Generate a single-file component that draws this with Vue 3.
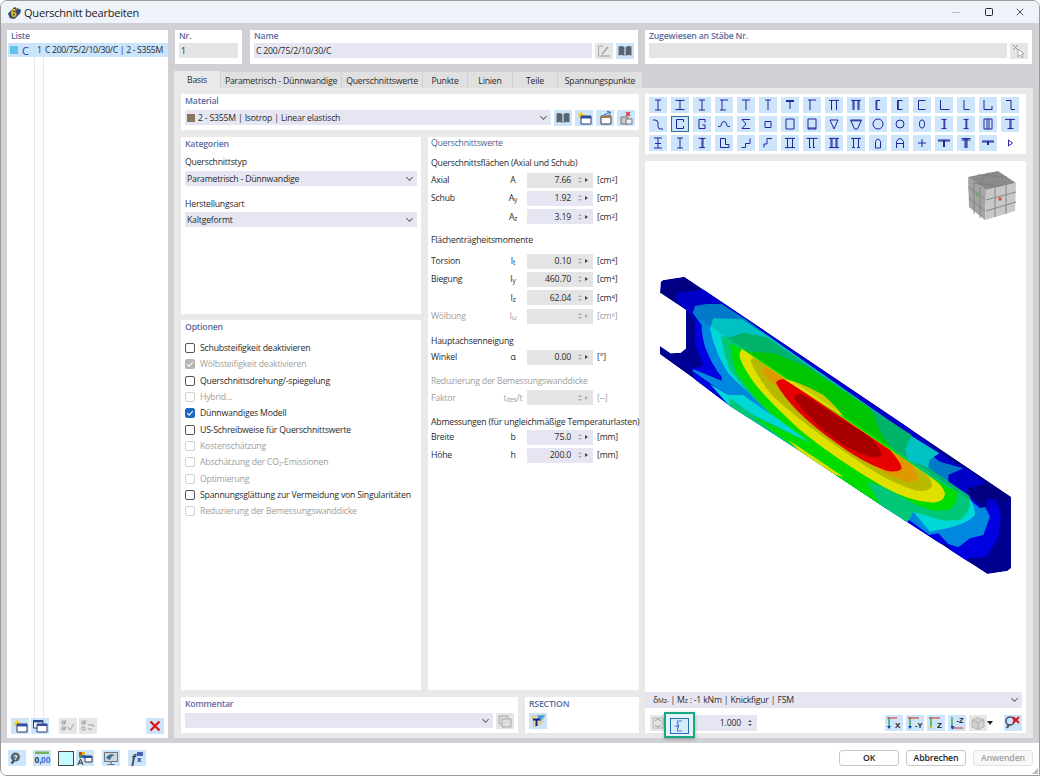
<script setup>
import { h } from 'vue'

const D = '#24249c'
const s = (d, sw = 1.1, c = D) => ({ d, fill: 'none', stroke: c, 'stroke-width': sw })
const f = (d, c, st = 'none', sw = 0.6) => ({ d, fill: c, stroke: st, 'stroke-width': sw })
const t = (x, y, text, size, c, w = 700, style = 'normal') => ({ text, x, y, size, c, w, style })

const palette = [
  'M6 3H12M9 3V13M6 13H12', 'M4.5 3.4H13.5M9 3V13M4.5 12.6H13.5', 'M6 3H12M9 3V13M6 13H12', 'M5 3H13M7 3V13M5 13H11',
  'M5 3H13M9 3V13', 'M6 3H12M9 3V13', 'M5 3.5H13M5 4.5H13M9 3V12', 'M5 3H13M7 3V13',
  'M4 3.4H14M6.5 3V13M11.5 3V13', 'M4 3.4H14M6 3V13M7 3V13M11 3V13M12 3V13', 'M11 3.5H7V12.5H11M7.8 3.5V12.5', 'M11.5 3.5H6.5V12.5H11.5M7.3 3.5V12.5',
  'M12.5 3.5H5.5V12.5H12.5', 'M5.5 3V12.5H14.5', 'M7 3V12.5H12.5', 'M5 3V12.5H13V9', 'M5 3.5H10V12.5H14',
  'M4 4H6Q9 4 9 7V10Q9 13 11 13H14', 'M12.5 6V3.5H5.5V12.5H12.5V10', 'M12 6.5V3.5H6V12.5H12V9H9.5', 'M3 10.5H5Q6 10.5 6.5 8Q7 5.5 9 5.5Q11 5.5 11.5 8Q12 10.5 13 10.5H15', 'M13 3.5H5L9 8L5 12.5H13',
  'M6 5.5H12V11.5H6Z', 'M5 3H13V13H5Z', 'M5 3H13V13H5ZM5 12H13', 'M5 4H13L9 13Z', 'M3.5 4H14.5L10.5 13H7.5ZM4 4.8H14', 'M14 8A5 5 0 1 1 4 8A5 5 0 1 1 14 8Z', 'M13 8A4 4 0 1 1 5 8A4 4 0 1 1 13 8Z',
  'M11.5 8A2.5 4 0 1 1 6.5 8A2.5 4 0 1 1 11.5 8Z', 'M6.5 3.4H11.5M9 3V13M9.8 3V13M6.5 12.6H11.5', 'M6.5 3.4H11.5M9 3V13M9.8 3V13M6.5 12.6H11.5', 'M5 3H13V13H5ZM8 3V13M10 3V13', 'M4 3.4H14M9 3V13M10 3V13M6.5 12.6H12.5',
  'M5 3H13M9 3V13M6 8.5H12M5 13H13', 'M6 3H12M9 3V13M6 13H12', 'M5.5 3.4H12.5M9 3V13M10 3V13M6 12.6H12', 'M5.5 12.5V3.5H10.5V9.5H14V12.5Z', 'M4.5 12.5H8.5V8.5H13V3.5', 'M13 3.5H8V9H5V12.5',
  'M4 3.4H14M6.5 3V13M11.5 3V13M4 12.6H14', 'M3.5 3.4H14.5M6.5 3V13M10.5 3V13M6 12.6H8M10 12.6H12', 'M4 3.4H14M6 3V13M7 3V13M11 3V13M12 3V13M4 12.6H14', 'M4 3.4H14M6.5 3V13M11.5 3V13M5 12.6H8M10 12.6H13',
  'M6.5 13V6.5Q9 1.5 11.5 6.5V13Z', 'M5.5 13V6.5Q9 .5 12.5 6.5V13M5.5 8.5H12.5', 'M9 4V12M5 8H13', 'M3 5H15M3 6H15M8.5 5V12M9.5 5V12', 'M4.5 3.6H13.5M4.5 5H13.5M8 3V13M10 3V13M9 3V13', 'M3 6H15M3 7H15M8.5 6V10M9.5 6V10',
  'M7.5 5L11.5 8L7.5 11Z'
]

const shapes = {
  book: [f('M2.5 3.5Q6 2.5 8.4 4V13Q6 11.5 2.5 12.5Z', '#5c6470'), f('M15.5 3.5Q12 2.5 9.6 4V13Q12 11.5 15.5 12.5Z', '#5c6470')],
  pen: [s('M3.5 3H8M3.5 3V13H8', 1, '#9a9a9a'), s('M7 11L13 4M6 13H15', 1.2, '#8a8a8a')],
  star: [f('M6 1L7.2 3.8L10 4L8 5.8L8.6 8.6L6 7L3.4 8.6L4 5.8L2 4L4.8 3.8Z', '#f2d022'), f('M6 6H16V14H6Z', '#fff', '#2a3a6a', 1), f('M6 6H16V8.4H6Z', '#2d4e9a')],
  copy: [f('M2.5 2.5H12V10H2.5Z', '#fff', '#2a3a6a', 1), f('M2.5 2.5H12V4.5H2.5Z', '#2d4e9a'), f('M6 6H16V14H6Z', '#fff', '#2a3a6a', 1), f('M6 6H16V8H6Z', '#2d4e9a')],
  boxin: [f('M5 6H15V14H5Z', '#fff', '#333', 1), f('M5 6H15V8H5Z', '#a77b55'), s('M8 5L14 2M11 1.5L14.5 2L13 5', 1, '#3a68c8')],
  delobj: [f('M4 7H11V14H4Z', '#c8c8c8', '#777', 1), f('M9 9H15V14H9Z', '#eee', '#777', 1), s('M9 2L13 6M13 2L9 6', 1.5, '#d53030')],
  chk: [s('M3 3H6V6H3ZM3 9H6V12H3Z', .8, '#8c8c8c'), s('M3.5 4L5 5.5L7 2.5M3.5 10L5 11.5L7 8.5M9 9L11 12L15 6', 1, '#8c8c8c')],
  chk2: [s('M3 3H6V6H3ZM3 9H6V12H3Z', .8, '#8c8c8c'), s('M3.5 4L5 5.5L7 2.5M9 7H14L15 9M9 11H13', 1, '#8c8c8c')],
  x: [s('M4.5 3.5L13.5 12.5M13.5 3.5L4.5 12.5', 2.4, '#e21616')],
  gc: [f('M3 3H12V11H3Z', '#d8d8d8', '#999', 1), f('M6 6H15V14H6Z', '#d8d8d8', '#999', 1)],
  cursor: [s('M3 2L8 7M8 2L3 7', 1, '#7a7a7a'), f('M8 6L8 14L10 12L12 15L13 14L11.5 11H14Z', '#fff', '#888', .8)],
  rsec: [f('M3 3L16 2L13 10L5 14Z', '#f1d9a0', '#c9a868', .5), f('M8 2.5L16 2L11 9Z', '#3e9cf0'), s('M4 6.5H11M7.5 6.5V13', 2, '#12228e')],
  search: [f('M12 7A4.6 4.6 0 1 1 2.8 7A4.6 4.6 0 1 1 12 7Z', '#5b6772'), s('M3.5 13.5L6 10.5', 2.4, '#4a545e'), t(5.2, 9.6, '?', 7, '#fff')],
  num: [f('M2 1.5H16V4H2Z', '#7cb15c'), t(1.5, 13, '0,', 8.5, '#233'), t(8, 13, '00', 8.5, '#2f6fd6')],
  pal: [f('M3 2H6V5H3Z', '#d83a2a'), f('M6 2H9V5H6Z', '#e0c020'), f('M3 5H6V8H3Z', '#2f9a40'), f('M6 5H9V8H6Z', '#3060d0'), s('M4.5 9L2 15M4.5 9L7 15M2.5 13H6.5', 1, '#333'), f('M9 6H16V12H9Z', '#fff', '#334', 1), f('M9 6H16V8H9Z', '#2d4e9a')],
  screen: [f('M2.5 2.5H15.5V11.5H2.5Z', '#cfd7de', '#6a7680', 1), f('M4 8Q7 2.5 13 5Q9 6 8 10Z', '#3d6f94'), s('M9 12V14M5.5 14.5H12.5', 1.2, '#6a7680')],
  fx: [t(2, 13, 'ƒ', 13, '#3a4550', 700, 'italic'), t(9, 12, 'x', 8, '#222a80'), f('M9 2H15V6H9Z', '#4a5fb0')],
  sigma: [s('M12 3H8Q7 3 7.5 5L8.5 7.5L6 8L8.5 8.8L7.5 11Q7 13 8 13H12', 1.1, '#3f79d8')],
  axx: [t(10, 13, 'X', 8, '#222'), s('M4 2V13', 1.1, '#168a2c'), s('M2 3H12', 1.1, '#d63c1a'), f('M2 11H6L4 14Z', '#1546c8')],
  axy: [t(9, 13, '-Y', 7.5, '#222'), s('M4 2V13', 1.1, '#168a2c'), s('M2 3H13', 1.1, '#d63c1a'), f('M2 11H6L4 14Z', '#1546c8')],
  axz: [t(10, 13, 'Z', 8, '#222'), s('M4 2V13', 1.1, '#168a2c'), s('M2 3H13', 1.1, '#d63c1a'), f('M2 11H6L4 14Z', '#d6c31a')],
  axmz: [t(8.5, 8, '-Z', 7.5, '#222'), s('M4 2V13', 1.1, '#168a2c'), s('M3 13H15', 1.1, '#d63c1a'), f('M2.5 11H6.5L4.5 14.5Z', '#1546c8')],
  cube: [f('M3 5L9 2.5L15 5V12L9 14.5L3 12Z', '#c9c9c9', '#a0a0a0', .8), s('M3 5L9 7.5L15 5M9 7.5V14.5', .8, '#9c9c9c')],
  zoomx: [f('M10 6A4 4 0 1 1 2 6A4 4 0 1 1 10 6Z', 'none', '#4a545e', 1.6), s('M3 13L5 9.5', 2.2, '#4a545e'), s('M9 2L15 8M15 2L9 8', 2, '#e21616')],
  gmini: [f('M3 3H13V13H3Z', '#ddd', '#9c9c9c', .8), s('M5 6L8 4L11 6M5 10L8 12L11 10', 1, '#8c8c8c')]
}

const Ic = (props) => {
  const list = props.d ? [{ d: props.d, fill: 'none', stroke: D, 'stroke-width': 1 }] : shapes[props.name]
  return h('svg', { viewBox: '0 0 18 16', class: 'ic' }, list.map((p) =>
    p.text
      ? h('text', { x: p.x, y: p.y, fill: p.c, style: { fontSize: p.size + 'px', fontWeight: p.w, fontStyle: p.style, fontFamily: 'Liberation Sans, sans-serif', letterSpacing: 0 } }, p.text)
      : h('path', p)
  ))
}
Ic.props = ['name', 'd']

const tabs = [
  { n: 'Basis', w: 46, on: true }, { n: 'Parametrisch - Dünnwandige', w: 120 }, { n: 'Querschnittswerte', w: 80 },
  { n: 'Punkte', w: 44 }, { n: 'Linien', w: 44 }, { n: 'Teile', w: 44 }, { n: 'Spannungspunkte', w: 84 }
]

const options = [
  ['Schubsteifigkeit deaktivieren'], ['Wölbsteifigkeit deaktivieren', 'dis chk'], ['Querschnittsdrehung/-spiegelung'], ['Hybrid...', 'dis'],
  ['Dünnwandiges Modell', 'chk'], ['US-Schreibweise für Querschnittswerte'], ['Kostenschätzung', 'dis'], ['Abschätzung der CO₂-Emissionen', 'dis'],
  ['Optimierung', 'dis'], ['Spannungsglättung zur Vermeidung von Singularitäten'], ['Reduzierung der Bemessungswanddicke', 'dis']
]

const groups = [
  { title: 'Querschnittsflächen (Axial und Schub)', cls: 'ga', rows: [
    { l: 'Axial', s: 'A', v: '7.66', u: '[cm', p: '2', grey: 1 }, { l: 'Schub', s: 'A', b: 'y', v: '1.92', u: '[cm', p: '2' }, { l: '', s: 'A', b: 'z', v: '3.19', u: '[cm', p: '2' }] },
  { title: 'Flächenträgheitsmomente', cls: 'gb', rows: [
    { l: 'Torsion', s: 'I', b: 't', v: '0.10', u: '[cm', p: '4', grey: 1 }, { l: 'Biegung', s: 'I', b: 'y', v: '460.70', u: '[cm', p: '4', grey: 1 }, { l: '', s: 'I', b: 'z', v: '62.04', u: '[cm', p: '4', grey: 1 },
    { l: 'Wölbung', s: 'I', b: 'ω', v: '', u: '[cm', p: '6', grey: 1, dis: 1 }] },
  { title: 'Hauptachsenneigung', cls: 'gc', rows: [{ l: 'Winkel', s: 'α', v: '0.00', u: '[°]', grey: 1 }] },
  { title: 'Reduzierung der Bemessungswanddicke', cls: 'gd', dis: 1, rows: [{ l: 'Faktor', s: 't', b: 'des', e: '/t', v: '', u: '[--]', grey: 1, dis: 1 }] },
  { title: 'Abmessungen (für ungleichmäßige Temperaturlasten)', cls: 'ge', rows: [{ l: 'Breite', s: 'b', v: '75.0', u: '[mm]' }, { l: 'Höhe', s: 'h', v: '200.0', u: '[mm]' }] }
]

const beam = [
  ['#0000e0', 'M80,100 L145,90 L240,80 L900,600 L955,630 L1010,670 L955,685 L955,705 L1005,748 L1008,720 L1038,715 L1053,770 L1045,830 L1010,890 L955,895 L952,915 L895,870 L895,855 L600,800 L130,355 L128,330 L78,292 L125,322 L160,318 L135,250 L135,175 L108,150 L80,125 Z'],
  ['#0088e0', 'M128,158 L135,138 L170,132 L215,132 L290,180 L850,590 L870,605 L940,625 L895,645 L895,665 L990,745 L1005,740 L1020,770 L1000,825 L960,835 L925,862 L895,852 L865,820 L838,825 L280,405 L235,405 L180,370 L128,333 L130,328 L215,362 L215,350 Q185,315 165,260 Q155,225 155,195 Z'],
  ['#00d8d8', 'M180,205 L190,175 L275,178 L360,232 L780,525 L868,580 L838,600 L835,625 L955,705 Q975,740 975,765 Q950,795 865,810 L840,815 L790,755 L770,790 L835,830 L240,440 L180,372 L235,405 L280,405 L360,462 L355,440 Q285,395 235,340 Q195,280 180,205 Z'],
  ['#00c878', 'M213,228 L240,232 L280,218 L350,232 L660,445 L785,525 L765,570 L775,600 L838,625 L960,710 Q965,755 930,780 L880,782 L790,755 L770,790 L695,740 L240,440 L240,415 L305,462 L483,550 L470,530 L360,460 Q290,400 240,330 Q220,280 213,228 Z'],
  ['#00dc00', 'M240,250 L270,265 L300,275 L370,280 L470,320 L660,445 L675,475 Q690,530 730,570 L840,650 L920,695 Q925,735 895,750 L850,752 L800,735 L700,680 L650,665 L695,740 L580,670 L310,470 L483,550 L360,460 Q310,410 260,340 Q245,300 240,250 Z'],
  ['#e0e000', 'M415,540 Q490,590 580,650 L540,640 Q470,600 415,540Z'],
  ['#e0e000', 'M268,285 Q272,270 276,267 L840,650 Q880,675 885,700 Q885,725 850,728 Q780,725 700,680 Q560,600 450,510 Q330,400 300,350 Q272,310 268,285Z'],
  ['#b8b800', 'M302,303 Q305,293 312,292 L830,645 Q850,665 845,680 Q835,695 800,692 Q720,670 620,600 Q470,500 370,410 Q320,350 302,303Z'],
  ['#e09800', 'M336,335 Q340,322 350,322 L780,610 Q805,635 803,655 Q795,668 770,665 Q690,640 600,570 Q440,450 336,335Z'],
  ['#e60000', 'M378,368 Q385,355 405,358 L720,570 Q755,610 755,625 Q745,640 710,632 Q640,610 560,550 Q420,450 378,368Z'],
  ['#e0e000', 'M400,356 Q450,365 520,405 Q560,440 580,470 Z'],
  ['#a80000', 'M432,410 Q440,398 462,405 L660,530 Q695,570 695,585 Q690,595 660,590 Q590,570 520,510 Q450,450 432,410Z'],
  ['#000090', 'M76,294 L125,322 L160,318 L128,326 L100,310Z']
]
const outline = 'M32,65 L40,60 L103,50 L1083,710 L1083,925 L1072,933 L1012,942 L700,740 L430,560 L240,438 L130,355 L30,283 L30,258 L62,280 L92,278 L108,265 L108,150 L30,98 Z'
</script>

<template>
  <div class="win">
    <header class="title">
      <svg class="logo" viewBox="0 0 16 16">
        <path d="M1 9L8 2L15 5L14 9L8 15L3 14Z" fill="#35506e" />
        <path d="M9 4L11 3L11 5Z" fill="#e89a2a" />
        <text x="4" y="13" class="six">6</text>
      </svg>
      <span class="title-text">Querschnitt bearbeiten</span>
      <span class="wbtns">
        <i class="wb min"></i><i class="wb max"></i>
        <svg class="wb-x" viewBox="0 0 10 10"><path d="M1 1L9 9M9 1L1 9" stroke="#222" stroke-width="1" fill="none" /></svg>
      </span>
    </header>

    <div class="body">
      <aside class="list">
        <div class="hd list-hd">Liste</div>
        <div class="sel"><i class="sw"></i><b class="c">C</b><span class="n">1</span><span class="seltext">C 200/75/2/10/30/C | 2 - S355M</span></div>
        <div class="tree"><i></i><i></i></div>
        <div class="list-btns">
          <button class="tb blue"><Ic name="star" /></button>
          <button class="tb blue"><Ic name="copy" /></button>
          <span class="gap8"></span>
          <button class="tb off"><Ic name="chk" /></button>
          <button class="tb off"><Ic name="chk2" /></button>
          <span class="grow"></span>
          <button class="tb blue"><Ic name="x" /></button>
        </div>
      </aside>

      <main class="main">
        <div class="top">
          <section class="card nr">
            <div class="hd">Nr.</div>
            <div class="field grey"><span>1</span></div>
          </section>
          <section class="card name">
            <div class="hd">Name</div>
            <div class="row">
              <div class="field lav grow"><span>C 200/75/2/10/30/C</span></div>
              <button class="tb off"><Ic name="pen" /></button>
              <button class="tb blue"><Ic name="book" /></button>
            </div>
          </section>
          <section class="card zug">
            <div class="hd">Zugewiesen an Stäbe Nr.</div>
            <div class="row">
              <div class="field grey grow"></div>
              <button class="tb off"><Ic name="cursor" /></button>
            </div>
          </section>
        </div>

        <nav class="tabs">
          <span v-for="tab in tabs" :key="tab.n" class="tab" :class="{ on: tab.on }" :style="{ width: tab.w + 'px' }">{{ tab.n }}</span>
        </nav>

        <div class="content">
          <div class="leftcol">
            <section class="card mat">
              <div class="hd">Material</div>
              <div class="row g3">
                <div class="field lav grow sel-f"><i class="swatch"></i><span>2 - S355M | Isotrop | Linear elastisch</span><i class="chev"></i></div>
                <button class="tb blue"><Ic name="book" /></button>
                <button class="tb blue"><Ic name="star" /></button>
                <button class="tb blue"><Ic name="boxin" /></button>
                <button class="tb blue"><Ic name="delobj" /></button>
              </div>
            </section>

            <div class="mid">
              <div class="midleft">
                <section class="card kat">
                  <div class="hd">Kategorien</div>
                  <div class="lbl first">Querschnittstyp</div>
                  <div class="field lav sel-f"><span>Parametrisch - Dünnwandige</span><i class="chev"></i></div>
                  <div class="lbl second">Herstellungsart</div>
                  <div class="field lav sel-f"><span>Kaltgeformt</span><i class="chev"></i></div>
                </section>
                <section class="card opt">
                  <div class="hd">Optionen</div>
                  <div class="opts">
                    <div v-for="o in options" :key="o[0]" class="opt-row" :class="o[1]">
                      <i class="cb"><svg v-if="o[1] && o[1].includes('chk')" viewBox="0 0 10 10"><path d="M2.2 5.2L4.2 7.2L7.8 3" fill="none" stroke="#fff" stroke-width="1.1" /></svg></i>
                      <span>{{ o[0] }}</span>
                    </div>
                  </div>
                </section>
              </div>

              <section class="card werte">
                <div class="hd">Querschnittswerte</div>
                <div v-for="g in groups" :key="g.title" class="grp">
                  <div class="gh" :class="[g.cls, { dim: g.dis }]">{{ g.title }}</div>
                  <div v-for="r in g.rows" :key="r.s + (r.b || '') + r.l" class="vrow" :class="{ dim: r.dis }">
                    <span class="vl">{{ r.l }}</span>
                    <span class="vs">{{ r.s }}<sub v-if="r.b">{{ r.b }}</sub>{{ r.e }}</span>
                    <span class="vf" :class="r.grey ? 'grey' : 'lav'">
                      <span class="vv">{{ r.v }}</span>
                      <span class="spin"><i class="up"></i><i class="dn"></i></span>
                      <i class="more"></i>
                    </span>
                    <span class="vu">{{ r.u }}<sup v-if="r.p">{{ r.p }}</sup><template v-if="r.p">]</template></span>
                  </div>
                </div>
              </section>
            </div>

            <div class="bottom">
              <section class="card kom">
                <div class="hd">Kommentar</div>
                <div class="row g3">
                  <div class="field lav grow sel-f"><i class="chev"></i></div>
                  <button class="tb off"><Ic name="gc" /></button>
                </div>
              </section>
              <section class="card rsec">
                <div class="hd">RSECTION</div>
                <button class="tb blue"><Ic name="rsec" /></button>
              </section>
            </div>
          </div>

          <div class="rightcol">
            <section class="card palette">
              <span v-for="(d, i) in palette" :key="i" class="pi" :class="{ cur: i === 18, bare: i === 50 }"><Ic :d="d" /></span>
            </section>
            <section class="card view">
              <div class="canvas">
                <svg class="beam" viewBox="0 0 1140 990">
                  <clipPath id="bc"><path :d="outline" /></clipPath>
                  <g clip-path="url(#bc)">
                    <path :d="outline" fill="#000090" />
                    <path v-for="(b, i) in beam" :key="i" :d="b[1]" :fill="b[0]" />
                    <path d="M100,50 L1083,710 L1005,750 L108,150 L30,98 Z" fill="#000" opacity=".1" />
                  </g>
                </svg>
                <svg class="cubev" viewBox="0 0 48 49">
                  <path d="M0 6L30 0L48 12L18 19Z" fill="#8b8b8b" />
                  <path d="M0 6L18 19L17 49L1 36Z" fill="#a4a4a4" />
                  <path d="M18 19L48 12L47 40L17 49Z" fill="#c8c8c8" />
                  <path d="M9 4L39 6M20 1.5L10 14M5 12L34 15M0 16L17 28M1 27L17 40M6 11V43M12 16V47" stroke="#7c7c7c" stroke-width=".8" fill="none" />
                  <path d="M18 29L48 21M18 40L48 31M27 16V46M38 14V43" stroke="#868686" stroke-width="1" fill="none" />
                  <path d="M30.5 26.5h3v3h-3z" fill="#d84a4a" />
                  <path d="M9 21v5" stroke="#62a862" stroke-width="1.5" />
                </svg>
              </div>
              <div class="field lav sel-f vcombo"><span>δ<small>Mz-</small> | M<small>z</small> : -1 kNm | Knickfigur | FSM</span><i class="chev"></i></div>
              <div class="vbar">
                <button class="tb off mini"><Ic name="gmini" /></button>
                <span class="hl"><button class="tb active"><Ic name="sigma" /></button></span>
                <span class="scale"><span class="sv">1.000</span><span class="spin dark"><i class="up"></i><i class="dn"></i></span></span>
                <span class="grow"></span>
                <button class="tb blue ax"><Ic name="axx" /></button>
                <button class="tb blue ax"><Ic name="axy" /></button>
                <button class="tb blue ax"><Ic name="axz" /></button>
                <button class="tb blue ax"><Ic name="axmz" /></button>
                <button class="tb off"><Ic name="cube" /></button>
                <i class="drop"></i>
                <button class="tb blue"><Ic name="zoomx" /></button>
              </div>
            </section>
          </div>
        </div>
      </main>
    </div>

    <footer class="foot">
      <button class="tb blue"><Ic name="search" /></button>
      <button class="tb blue s7"><Ic name="num" /></button>
      <i class="colorbox"></i>
      <button class="tb blue s1"><Ic name="pal" /></button>
      <button class="tb blue s8"><Ic name="screen" /></button>
      <button class="tb blue s8"><Ic name="fx" /></button>
      <span class="grow"></span>
      <button class="dbtn">OK</button>
      <button class="dbtn">Abbrechen</button>
      <button class="dbtn dis">Anwenden</button>
      <i class="grip"></i>
    </footer>
  </div>
</template>

<style>
html, body { margin: 0; background: #fff; }
.ic { display: block; width: 18px; height: 16px; }
</style>

<style scoped>
* { box-sizing: border-box; }
.win {
  width: 1040px; height: 776px; display: flex; flex-direction: column; overflow: hidden;
  font-family: "Open Sans", "Noto Sans", sans-serif; font-size: 8.7px; letter-spacing: -0.2px; color: #2a2a2a;
  background: #fff; border: 1px solid #9a9a9a; border-radius: 7px 7px 0 7px;
}
.title { height: 22px; flex: none; display: flex; align-items: center; background: #eef3f9; padding-left: 6px; }
.logo { width: 15px; height: 15px; }
.six { font: 700 11px "Liberation Sans", sans-serif; fill: #f2c31c; }
.title-text { margin-left: 2px; font-size: 11px; color: #222; }
.wbtns { margin-left: auto; display: flex; align-items: center; }
.wb { display: block; }
.min { width: 8px; height: 1px; background: #bbb; margin-right: 25px; }
.max { width: 8px; height: 8px; border: 1px solid #222; border-radius: 1.5px; margin-right: 23px; }
.wb-x { width: 8px; height: 8px; margin-right: 15px; }

.body { flex: 1; min-height: 0; display: flex; gap: 6px; padding: 7px 6px 5px 6px; background: #d1d1d5; }
.card { background: #fff; }
.hd { font-weight: 600; color: #5b6c9c; line-height: 12px; }
.grow { flex: 1; }
.row { display: flex; gap: 4px; }
.g3 { gap: 3px; }

.list { width: 161px; flex: none; background: #fff; display: flex; flex-direction: column; }
.list-hd { padding: 0 0 0 4px; height: 13px; line-height: 12px; }
.sel { height: 14px; margin-left: 1px; background: #c9e4fb; display: flex; align-items: center; white-space: nowrap; overflow: hidden; }
.seltext { letter-spacing: -0.33px; }
.sw { width: 8px; height: 8px; background: #62c4ee; margin-left: 2px; flex: none; }
.c { color: #2a36b8; font-weight: 400; font-size: 11px; margin-left: 4px; width: 9px; flex: none; }
.n { margin-left: 6px; width: 8px; flex: none; }
.tree { flex: 1; display: flex; padding-left: 27px; }
.tree i { width: 9px; border-left: 1px solid #e8e8e8; }
.tree i:last-child { border-right: 0; }
.list-btns { height: 20px; padding: 0 4px; display: flex; gap: 2px; align-items: flex-start; }
.gap8 { width: 6px; }

.tb { width: 18px; height: 16px; padding: 0; border: 0; background: #e0e0e0; flex: none; display: block; }
.blue { background: #cde5fa; }
.off { background: #e2e2e2; opacity: .85; }
.active { background: #d8ebfc; border: 1px solid #2a6fb8; width: 18px; height: 16px; overflow: hidden; }
.active .ic { margin: -1px; }

.main { flex: 1; min-width: 0; display: flex; flex-direction: column; }
.top { height: 34px; flex: none; display: flex; gap: 8px; padding-left: 1px; margin-bottom: 8px; }
.top .card { padding: 0 4px; }
.top .hd { height: 13px; padding-left: 0; }
.nr { width: 67px; }
.name { width: 388px; }
.zug { width: 387px; margin-left: -1px; }
.name .row, .zug .row { gap: 3px; }
.field { height: 15px; display: flex; align-items: center; padding-left: 2px; white-space: nowrap; }
.grey { background: #e4e4e4; }
.lav { background: #e6e6f2; }

.tabs { height: 16px; flex: none; display: flex; margin-bottom: 0; }
.tab { height: 16px; margin-right: 1px; background: #e0e0e0; display: flex; align-items: center; justify-content: center; white-space: nowrap; padding-top: 1px; }
.tab.on { background: #e9e9e9; height: 17px; margin-top: -1px; }

.content { flex: 1; min-height: 0; background: #e9e9e9; padding: 6px 7px 5px 7px; display: flex; gap: 6px; width: 859px; }
.leftcol { width: 458px; flex: none; display: flex; flex-direction: column; gap: 7px; }
.rightcol { width: 381px; flex: none; display: flex; flex-direction: column; gap: 7px; }

.mat { height: 36px; padding: 1px 4px 0; }
.mat .hd { height: 15px; }
.sel-f { position: relative; padding-right: 18px; }
.swatch { width: 8px; height: 8px; background: #8a7762; margin-right: 3px; }
.chev { position: absolute; right: 5px; top: 4px; width: 5px; height: 5px; border-right: 1px solid #666; border-bottom: 1px solid #666; transform: rotate(45deg); }

.mid { flex: 1; min-height: 0; display: flex; gap: 7px; }
.midleft { width: 240px; flex: none; display: flex; flex-direction: column; gap: 6px; }
.kat { height: 177px; padding: 1px 4px 0; }
.lbl { line-height: 12px; }
.lbl.first { margin-top: 6px; margin-bottom: 3px; }
.lbl.second { margin-top: 12px; margin-bottom: 2px; }
.opt { flex: 1; padding: 1px 4px 0; }
.opts { margin-top: 7px; }
.opt-row { height: 16.3px; display: flex; align-items: center; gap: 5px; white-space: nowrap; }
.cb { width: 10px; height: 10px; border: 1px solid #555; border-radius: 2px; background: #fff; flex: none; display: block; }
.cb svg { display: block; width: 10px; height: 10px; margin: -1px; }
.opt-row.dis { color: #9e9e9e; }
.opt-row.dis .cb { border-color: #d0d0d0; }
.opt-row.chk .cb { background: #1e68c0; border-color: #1e68c0; }
.opt-row.dis.chk .cb { background: #b5b5b5; border-color: #b5b5b5; }

.werte { flex: 1; min-width: 0; padding: 0 3px; }
.werte > .hd { height: 12px; font-weight: 400; color: #4f628f; }
.gh { height: 12px; line-height: 12px; white-space: nowrap; }
.gh.ga { margin-top: 8px; margin-bottom: 2px; }
.gh.gb { margin-top: 8px; margin-bottom: 6px; }
.gh.gc { margin-top: 10px; margin-bottom: 1px; }
.gh.gd { margin-top: 8px; margin-bottom: 2px; }
.gh.ge { margin-top: 9px; margin-bottom: 0; }
.vrow { height: 18.33px; display: flex; align-items: center; position: relative; }
.vl { width: 68px; flex: none; }
.vs { width: 28px; flex: none; text-align: center; white-space: nowrap; }
.vs sub { font-size: 6.5px; vertical-align: -1px; line-height: 0; }
.vf { width: 66px; height: 15px; flex: none; display: flex; align-items: center; }
.vv { width: 44px; text-align: right; }
.spin { width: 6px; margin-left: 6px; display: flex; flex-direction: column; gap: 2px; align-items: center; }
.spin i { width: 0; height: 0; border-left: 2px solid transparent; border-right: 2px solid transparent; }
.spin .up { border-bottom: 2.5px solid #aaa; }
.spin .dn { border-top: 2.5px solid #aaa; }
.spin.dark .up { border-bottom-color: #555; }
.spin.dark .dn { border-top-color: #555; }
.more { width: 0; height: 0; margin-left: 2px; border-top: 2.5px solid transparent; border-bottom: 2.5px solid transparent; border-left: 3.5px solid #444; }
.vu { margin-left: 4px; white-space: nowrap; }
.vu sup { font-size: 6px; vertical-align: 2.5px; line-height: 0; }
.dim, .dim .vl, .dim .vs, .dim .vu { color: #9e9e9e; }
.dim .more { border-left-color: #aaa; }

.bottom { height: 36px; flex: none; display: flex; gap: 7px; }
.kom { width: 337px; padding: 1px 4px 0; }
.kom .hd, .rsec .hd { height: 15px; }
.rsec { flex: 1; padding: 1px 4px 0; }

.palette { height: 60px; flex: none; padding: 3px 4px; display: grid; grid-template-columns: repeat(17, 18px); grid-auto-rows: 16px; column-gap: 4px; row-gap: 3px; }
.pi { background: #cde5fa; width: 18px; height: 16px; display: block; }
.pi.cur { outline: 1px solid #2f6a9e; outline-offset: -1px; }
.pi.bare { background: transparent; }

.view { flex: 1; min-height: 0; display: flex; flex-direction: column; border-radius: 3px 3px 0 0; }
.canvas { flex: 1; position: relative; }
.beam { position: absolute; left: 5px; top: 99px; width: 380px; height: 330px; }
.cubev { position: absolute; left: 323px; top: 10px; width: 48px; height: 49px; }
.vcombo { height: 16px; flex: none; width: 377px; padding-left: 8px; }
.vcombo small { font-size: 6.5px; }
.vbar { height: 27px; flex: none; display: flex; align-items: center; padding: 3px 4px 0 5px; margin-bottom: -2px; position: relative; }
.mini { width: 15px; }
.hl { display: block; padding: 4px 5px 4px 5px; margin: 3px 0 0 -1px; border: 2px solid #17a884; box-shadow: 0 1px 3px rgba(0,0,0,.3); position: relative; z-index: 1; background: #e3f3f6; width: 31px; height: 26px; }
.hl .tb { width: 19px; height: 16px; margin: 0 0 0 -1px; }
.scale { width: 62px; height: 16px; background: #e6e6f2; display: flex; align-items: center; justify-content: flex-end; }
.scale .spin { margin: 0 4px 0 6px; }
.ax { margin-right: 3px; }
.drop { width: 0; height: 0; margin: 0 11px 0 0; border-left: 3px solid transparent; border-right: 3px solid transparent; border-top: 4px solid #222; }

.foot { height: 32px; flex: none; display: flex; align-items: center; padding: 0 6px 2px 7px; position: relative; background: #fff; }
.s7 { margin-left: 7px; }
.s1 { margin-left: 2px; }
.s8 { margin-left: 8px; }
.colorbox { display: block; width: 16px; height: 15px; margin-left: 7px; background: #c4fbff; border: 1px solid #444; }
.dbtn { width: 60px; height: 16px; margin-left: 7px; padding: 0; background: #fff; border: 1px solid #c8c8c8; border-radius: 3px; font: 600 8.7px "Open Sans", "Noto Sans", sans-serif; letter-spacing: -0.1px; color: #222; }
.dbtn.dis { color: #a0a0a0; border-color: #e2e2e2; background: #f8f8f8; }
.grip { position: absolute; right: 1px; bottom: 1px; width: 6px; height: 6px; background: radial-gradient(circle, #999 0.6px, transparent 0.9px) 0 0 / 2px 2px; clip-path: polygon(100% 0, 100% 100%, 0 100%); }
</style>
